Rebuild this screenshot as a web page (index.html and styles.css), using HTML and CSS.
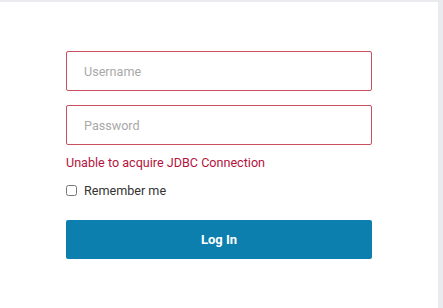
FILE: index.html
```html
<!DOCTYPE html>
<html>
<head>
<meta charset="utf-8">
<link rel="stylesheet" href="styles.css">
</head>
<body>
<div class="panel">
  <form class="login">
    <input class="field" type="text" placeholder="Username">
    <input class="field" type="password" placeholder="Password">
    <div class="error">Unable to acquire JDBC Connection</div>
    <label class="remember"><input type="checkbox" class="check"><span>Remember me</span></label>
    <button type="button" class="btn">Log In</button>
  </form>
</div>
</body>
</html>
```
FILE: styles.css
```css
html, body {
  margin: 0;
  padding: 0;
  background: #e9ebee;
  font-family: Roboto, "Liberation Sans", sans-serif;
}
.panel {
  margin: 2px 5px 0 0;
  height: 306px;
  background: #fff;
  box-sizing: border-box;
  padding: 49px 0 0 66px;
}
.login {
  width: 306px;
  display: flex;
  flex-direction: column;
}
.field {
  box-sizing: border-box;
  height: 40px;
  width: 306px;
  border: 1px solid #c8505f;
  border-radius: 2px;
  padding: 0 17px;
  font-family: Roboto, "Liberation Sans", sans-serif;
  font-size: 12.6px;
  color: #333;
  margin: 0 0 14px 0;
  outline: none;
}
.field::placeholder { color: #a9a9a9; }
.field + .field { margin-bottom: 0; }
.error {
  margin-top: 10px;
  font-size: 12.6px;
  line-height: 15px;
  color: #b3143c;
}
.remember {
  display: flex;
  align-items: center;
  margin-top: 13px;
  font-size: 12.6px;
  color: #333;
  line-height: 15px;
}
.check {
  margin: 0 7px 0 0;
  width: 11px;
  height: 11px;
}
.btn {
  margin-top: 22px;
  height: 39px;
  width: 306px;
  border: none;
  border-radius: 2px;
  background: #0d7fae;
  color: #fff;
  font-family: Roboto, "Liberation Sans", sans-serif;
  font-weight: bold;
  font-size: 13px;
}
```
